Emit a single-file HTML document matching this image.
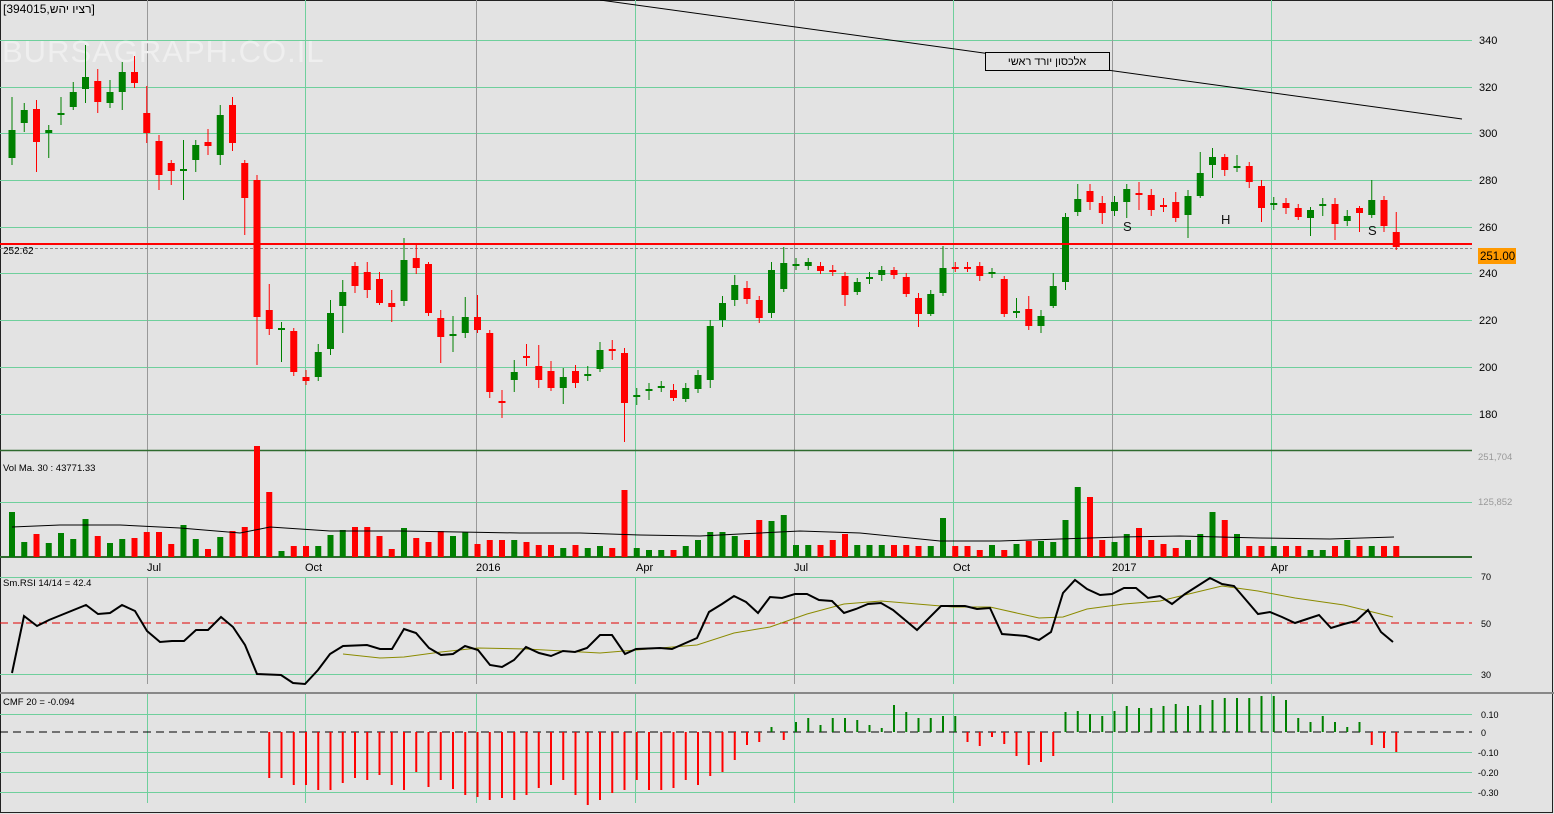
<!DOCTYPE html>
<html><head><meta charset="utf-8"><style>
html,body{margin:0;padding:0;background:#e3e3e3;}
svg{display:block;font-family:"Liberation Sans","Noto Sans CJK JP",sans-serif;}
</style></head><body>
<svg id="s" width="1554" height="814" viewBox="0 0 1554 814" xmlns="http://www.w3.org/2000/svg">
<rect x="0" y="0" width="1554" height="814" fill="#e3e3e3"/>
<rect x="0.5" y="0.5" width="1552" height="812" fill="none" stroke="#222" stroke-width="1"/>
<g id="grid" stroke="#6fcf9c" stroke-width="1"></g>
<text x="2" y="62" font-size="31" fill="#efefef" letter-spacing="1">BURSAGRAPH.CO.IL</text>
<text x="3" y="13" font-size="12" fill="#000">[394015,רציו יהש]</text>
<line x1="0" y1="450.5" x2="1472" y2="450.5" stroke="#2f6b2f" stroke-width="1.5"/>
<line x1="0" y1="557" x2="1472" y2="557" stroke="#2f6b2f" stroke-width="2"/>
<line x1="0" y1="693" x2="1554" y2="693" stroke="#888" stroke-width="2"/>
<line x1="600" y1="0" x2="1462" y2="119" stroke="#000" stroke-width="1"/>
<rect x="985.5" y="52.5" width="124" height="18" fill="#e3e3e3" stroke="#000"/>
<text x="1047" y="65" font-size="11" text-anchor="middle" fill="#000">אלכסון יורד ראשי</text>
<line x1="0" y1="248.5" x2="1472" y2="248.5" stroke="#888" stroke-dasharray="3,2"/>
<g id="candles"></g>
<line x1="0" y1="244" x2="1472" y2="244" stroke="#f00" stroke-width="2"/>
<text x="3" y="254" font-size="10" fill="#000">252.62</text>
<rect x="1478" y="248" width="38" height="16" fill="#ff9900"/>
<text x="1480" y="260" font-size="11.5" fill="#000">251.00</text>
<text x="1123" y="231" font-size="13" fill="#111">S</text>
<text x="1221" y="224" font-size="13" fill="#111">H</text>
<text x="1368" y="235" font-size="13" fill="#111">S</text>
<g font-size="11" fill="#000">
<text x="1479" y="44">340</text><text x="1479" y="91">320</text><text x="1479" y="137">300</text>
<text x="1479" y="184">280</text><text x="1479" y="231">260</text><text x="1479" y="277">240</text>
<text x="1479" y="324">220</text><text x="1479" y="371">200</text><text x="1479" y="418">180</text>
</g>
<g font-size="9.5" fill="#999"><text x="1478" y="460">251,704</text><text x="1478" y="505">125,852</text></g>
<text x="3" y="471" font-size="9.5" fill="#000">Vol Ma. 30 : 43771.33</text>
<g id="vol"></g>
<g font-size="11" fill="#000">
<text x="147" y="571">Jul</text><text x="305" y="571">Oct</text><text x="476" y="571">2016</text>
<text x="636" y="571">Apr</text><text x="794" y="571">Jul</text><text x="953" y="571">Oct</text>
<text x="1112" y="571">2017</text><text x="1271" y="571">Apr</text>
</g>
<text x="3" y="586" font-size="9.5" fill="#000">Sm.RSI 14/14 = 42.4</text>
<line x1="0" y1="623" x2="1472" y2="623" stroke="#e00000" stroke-dasharray="8,5"/>
<g font-size="9" fill="#000"><text x="1481" y="580">70</text><text x="1481" y="627">50</text><text x="1481" y="678">30</text></g>
<polyline id="sig" fill="none" stroke="#8b8b00" stroke-width="1"/>
<polyline id="rsi" fill="none" stroke="#000" stroke-width="2"/>
<text x="3" y="705" font-size="9.5" fill="#000">CMF 20 = -0.094</text>
<line x1="0" y1="732" x2="1472" y2="732" stroke="#000" stroke-dasharray="8,5"/>
<g font-size="9" fill="#000"><text x="1481" y="718">0.10</text><text x="1481" y="736">0</text><text x="1478" y="756">-0.10</text><text x="1478" y="776">-0.20</text><text x="1478" y="796">-0.30</text></g>
<g id="cmf"></g>
</svg>
<script>
var NS="http://www.w3.org/2000/svg";
function el(p,t,a){var e=document.createElementNS(NS,t);for(var k in a)e.setAttribute(k,a[k]);document.getElementById(p).appendChild(e);return e;}
[40,87,133,180,227,273,320,367,414].forEach(function(y){el('grid','line',{x1:0,y1:y+.5,x2:1472,y2:y+.5});});
el('grid','line',{x1:0,y1:502.5,x2:1472,y2:502.5});
[577,674].forEach(function(y){el('grid','line',{x1:0,y1:y+.5,x2:1472,y2:y+.5});});
[714,752,772,792].forEach(function(y){el('grid','line',{x1:0,y1:y+.5,x2:1472,y2:y+.5});});
[147,305,476,635,794,953,1112,1271].forEach(function(x,i){
 var c=(i%2==0)?'#999':'#6fcf9c';
 el('grid','line',{x1:x+.5,y1:0,x2:x+.5,y2:557,stroke:c});
 el('grid','line',{x1:x+.5,y1:577,x2:x+.5,y2:684,stroke:c});
 el('grid','line',{x1:x+.5,y1:694,x2:x+.5,y2:803,stroke:'#6fcf9c'});
});
var C=[[1,130,158,97,165],[1,110,123,103,132],[0,109,142,100,172],[1,130,133,125,158],[1,113,115,97,125],[1,92,107,82,110],[1,77,89,45,103],[0,81,102,69,113],[1,92,103,80,108],[1,72,92,62,110],[0,72,83,56,88],
[0,113,133,86,143],[0,141,175,135,190],[0,163,171,160,185],[1,169,171,140,200],[1,145,160,140,172],[0,142,146,129,155],[1,115,155,105,165],[0,105,143,97,151],[0,163,198,160,235],[0,180,317,175,365],
[0,310,329,284,335],[1,328,330,322,362],[0,331,372,328,376],[0,377,381,370,385],[1,352,377,344,381],[1,313,349,300,355],[1,292,306,280,333],[0,266,286,262,293],[0,272,290,262,298],[0,279,303,272,305],
[0,303,307,290,322],[1,260,301,238,306],[0,258,268,243,274],[0,264,313,262,316],[0,318,337,310,363],[1,334,336,316,352],[1,317,333,297,338],[0,317,330,295,333],[0,333,392,330,398],[0,401,403,390,418],
[1,372,380,360,392],[0,356,358,344,366],[0,366,380,345,388],[0,371,388,361,391],[1,377,388,368,404],[0,371,383,365,388],[1,374,376,366,381],[1,350,369,342,372],[0,349,351,340,360],[0,353,403,348,442],
[1,395,397,388,405],[1,389,391,383,400],[1,386,388,381,392],[0,390,398,384,401],[1,388,399,383,402],[1,375,389,370,393],[1,326,380,320,388],[1,303,320,296,327],[1,285,300,275,306],[0,288,299,281,304],
[0,300,318,296,323],[1,270,313,262,318],[1,263,289,247,292],[1,264,266,258,270],[1,262,266,258,270],[0,266,271,262,274],[0,270,272,265,276],[0,276,295,272,306],[1,282,292,278,295],[1,277,279,272,284],
[1,270,275,266,281],[0,270,275,267,279],[0,277,294,273,297],[0,298,314,293,327],[1,294,314,290,316],[1,268,293,246,296],[0,267,269,262,272],[0,267,269,262,272],[0,266,276,262,281],[1,272,274,268,278],
[0,279,314,276,317],[1,311,313,298,318],[0,309,326,296,330],[1,316,326,310,333],[1,286,306,273,308],[1,217,282,213,290],[1,199,212,184,216],[0,191,202,184,210],[0,203,213,196,224],[1,202,211,196,216],
[1,189,202,184,218],[0,193,195,182,210],[0,195,210,189,216],[0,205,207,198,212],[0,202,218,192,222],[1,196,215,190,238],[1,173,196,152,198],[1,157,165,148,178],[0,157,170,154,176],[1,166,168,155,172],
[0,166,182,162,188],[0,186,208,180,222],[1,203,205,197,210],[0,203,208,198,214],[0,208,217,204,220],[1,210,218,207,236],[1,204,206,198,216],[0,204,224,198,240],[1,216,221,210,226],[0,208,213,206,232],
[1,200,215,180,218],[0,200,226,196,232],[0,232,247,212,250]];
var V=[512,542,534,543,533,539,519,536,543,539,538,532,532,544,525,539,549,537,531,527,446,492,551,546,546,546,535,530,527,527,536,549,528,538,542,531,536,532,544,540,540,540,542,545,545,548,545,548,546,548,490,548,550,550,550,546,540,532,532,536,540,520,521,515,545,545,545,540,534,545,545,545,545,545,546,546,518,546,546,550,545,550,544,541,541,542,520,487,497,540,542,534,528,540,544,548,540,534,512,520,534,546,546,546,546,546,550,550,546,540,546,546,546,546];
var CM=[null,null,null,null,null,null,null,null,null,null,null,null,null,null,null,null,null,null,null,null,null,778,778,785,785,790,790,783,778,780,775,785,790,772,787,780,789,795,797,800,798,800,795,788,785,780,795,805,800,793,790,780,790,790,788,780,785,776,772,760,745,742,727,740,722,718,725,718,718,720,725,728,705,712,718,718,716,716,742,746,737,744,756,765,762,756,712,711,714,716,711,706,708,708,706,704,706,705,700,698,698,698,696,696,700,718,722,716,722,727,722,745,748,752];
for(var i=0;i<C.length;i++){
 var c=C[i],x=12+12.25*i,col=c[0]?'#008000':'#ff0000';
 el('candles','line',{x1:x,y1:c[3],x2:x,y2:c[4],stroke:col,'stroke-width':1});
 el('candles','rect',{x:x-3.5,y:c[1],width:7,height:Math.max(2,c[2]-c[1]),fill:col});
 el('vol','rect',{x:x-3,y:V[i],width:6,height:557-V[i],fill:col});
 var v=CM[i]; if(v!=null){var g=v<732;el('cmf','rect',{x:x-1,y:g?v:732,width:2,height:Math.abs(v-732),fill:g?'#008000':'#ff0000'});}
}
el('vol','polyline',{points:"12,527 60,525 120,525 180,528 240,533 270,527 330,531 400,531 460,532 520,533 580,533 640,535 700,536 760,533 800,531 860,533 940,541 1000,541 1060,539 1120,537 1180,536 1260,538 1330,539 1394,537",fill:'none',stroke:'#000','stroke-width':1});
document.getElementById('rsi').setAttribute('points',"12,673 24,616 37,626 49,620 86,605 98,614 110,613 122,605 135,611 147,631 160,642 172,641 184,641 196,630 208,630 221,617 233,627 245,645 257,674 281,675 293,683 305,684 318,670 330,654 343,646 367,645 380,649 392,649 404,629 416,633 429,648 441,655 453,654 465,646 478,650 490,665 502,667 514,660 526,647 539,653 551,656 563,651 575,652 587,648 600,635 612,635 625,654 636,649 660,648 672,649 697,638 709,612 722,604 734,596 746,602 758,613 770,597 782,598 795,594 807,594 819,600 832,601 844,613 856,609 868,604 881,603 893,610 917,630 941,606 965,606 977,609 990,608 1002,634 1014,635 1026,636 1039,640 1051,632 1063,593 1075,580 1087,589 1100,595 1112,594 1124,588 1136,588 1148,598 1160,596 1172,604 1185,594 1210,578 1222,584 1234,586 1246,600 1258,614 1270,612 1282,617 1295,623 1307,619 1319,615 1331,628 1344,624 1356,621 1368,610 1381,632 1393,642");
document.getElementById('sig').setAttribute('points',"343,654 380,658 404,657 441,652 478,648 526,649 600,653 636,650 697,645 734,633 770,627 807,614 844,604 881,601 917,604 953,607 990,607 1039,618 1063,617 1087,609 1124,604 1160,601 1197,592 1222,586 1258,591 1295,598 1344,605 1393,617");
</script>
</body></html>
